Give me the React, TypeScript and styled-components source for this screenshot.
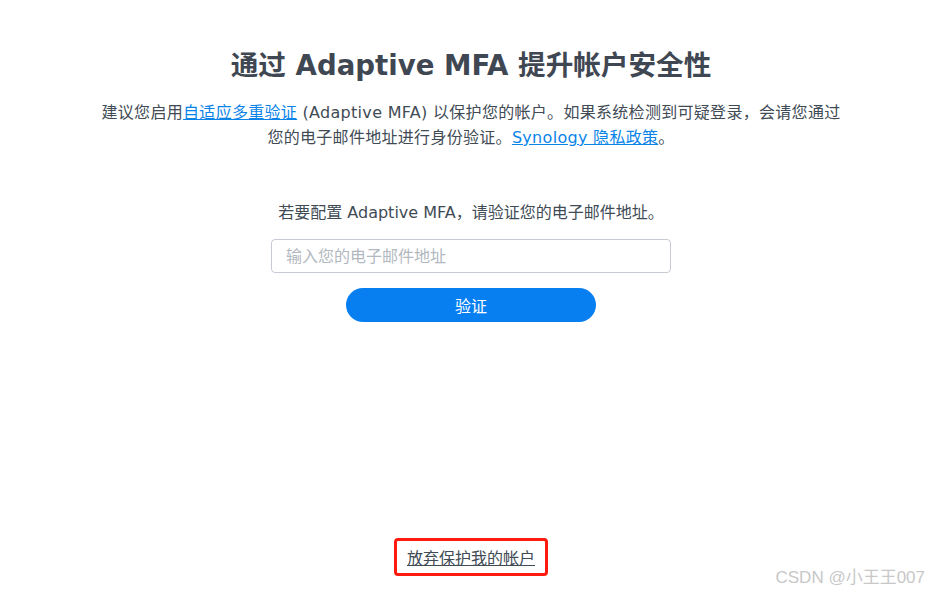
import React from "react";
import styled, { createGlobalStyle } from "styled-components";

const Global = createGlobalStyle`
  html, body { margin: 0; padding: 0; background: #ffffff; }
  body { font-family: "DejaVu Sans", "Noto Sans CJK SC", sans-serif; color: #414b55; }
`;

const Page = styled.div`
  position: relative;
  box-sizing: border-box;
  height: 594px;
  padding-left: 12px;
  display: flex;
  flex-direction: column;
  align-items: center;
  overflow: hidden;
`;

const Title = styled.h1`
  margin: 46px 0 0;
  font-size: 27.6px;
  line-height: 40px;
  font-weight: 700;
  color: #3f4852;
  text-align: center;
`;

const Intro = styled.p`
  margin: 14px 0 0;
  width: 752px;
  font-size: 16px;
  letter-spacing: 0.3px;
  line-height: 25px;
  text-align: center;
  color: #414b55;
`;

const Link = styled.a`
  color: #0a84e8;
  text-decoration: underline;
  cursor: pointer;
`;

const Prompt = styled.p`
  margin: 50px 0 0;
  font-size: 16px;
  line-height: 25px;
  color: #414b55;
  text-align: center;
`;

const EmailInput = styled.input`
  margin-top: 14px;
  box-sizing: border-box;
  width: 400px;
  height: 34px;
  padding: 0 14px;
  border: 1px solid #c6cbd3;
  border-radius: 4px;
  font-family: "DejaVu Sans", "Noto Sans CJK SC", sans-serif;
  font-size: 16px;
  color: #414b55;
  outline: none;
  &::placeholder { color: #b2b8c0; }
`;

const VerifyButton = styled.button`
  margin-top: 15px;
  width: 250px;
  height: 34px;
  border: none;
  border-radius: 17px;
  background: #077ff0;
  color: #ffffff;
  font-family: "DejaVu Sans", "Noto Sans CJK SC", sans-serif;
  font-size: 16px;
  cursor: pointer;
`;

const Footer = styled.div`
  margin-top: auto;
  margin-bottom: 18px;
  display: flex;
  justify-content: center;
`;

const GiveUpBox = styled.div`
  box-sizing: border-box;
  width: 154px;
  height: 38px;
  border: 3px solid #ff1a10;
  border-radius: 4px;
  display: flex;
  align-items: center;
  justify-content: center;
`;

const GiveUp = styled.a`
  font-size: 16px;
  color: #414b55;
  text-decoration: underline;
  cursor: pointer;
`;

const Watermark = styled.div`
  position: absolute;
  right: 5px;
  bottom: 6px;
  font-family: "Liberation Sans", "Noto Sans CJK SC", sans-serif;
  font-size: 17px;
  color: #c8c8c8;
`;

export default function App() {
  return (
    <>
      <Global />
      <Page>
        <Title>通过 Adaptive MFA 提升帐户安全性</Title>
        <Intro>
          建议您启用<Link>自适应多重验证</Link> (Adaptive MFA) 以保护您的帐户。如果系统检测到可疑登录，会请您通过您的电子邮件地址进行身份验证。
          <Link>Synology 隐私政策</Link>。
        </Intro>
        <Prompt>若要配置 Adaptive MFA，请验证您的电子邮件地址。</Prompt>
        <EmailInput placeholder="输入您的电子邮件地址" />
        <VerifyButton>验证</VerifyButton>
        <Footer>
          <GiveUpBox>
            <GiveUp>放弃保护我的帐户</GiveUp>
          </GiveUpBox>
        </Footer>
        <Watermark>CSDN @小王王007</Watermark>
      </Page>
    </>
  );
}
